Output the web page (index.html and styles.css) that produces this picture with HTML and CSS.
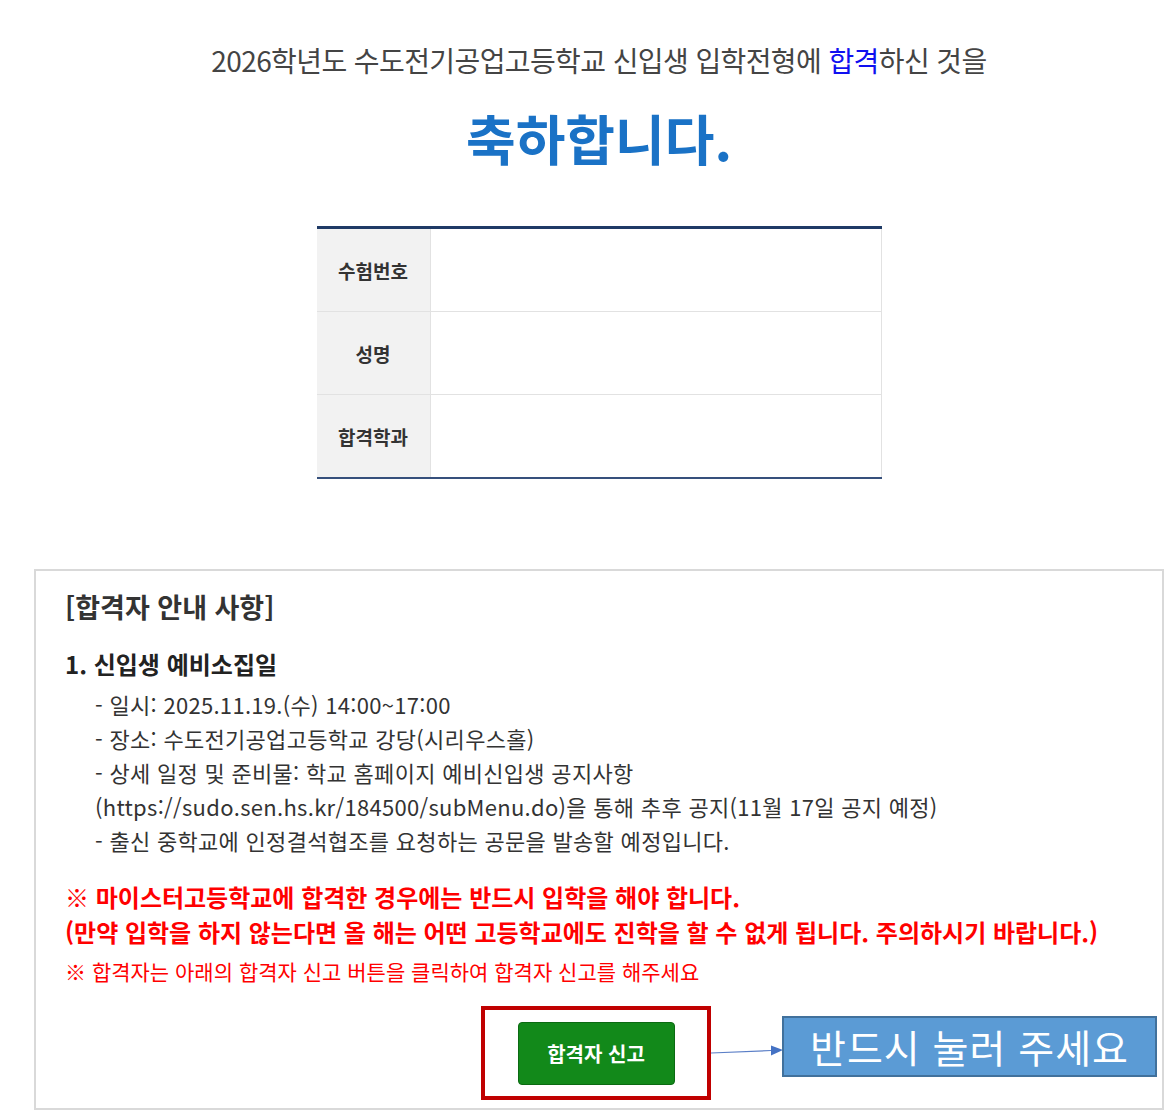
FILE: index.html
```html
<!DOCTYPE html>
<html lang="ko">
<head>
  <meta charset="UTF-8" />
  <meta name="viewport" content="width=device-width, initial-scale=1" />
  <title>합격자 조회 결과</title>
  <link rel="stylesheet" href="styles.css">
</head>
<body>
  <div class="page">
    <p class="lead">2026학년도 수도전기공업고등학교 신입생 입학전형에 <span class="hl">합격</span>하신 것을</p>
    <h1>축하합니다.</h1>

    <table class="result">
      <tr>
        <th>수험번호</th>
        <td></td>
      </tr>
      <tr>
        <th>성명</th>
        <td></td>
      </tr>
      <tr>
        <th>합격학과</th>
        <td></td>
      </tr>
    </table>

    <div class="notice">
      <h2>[합격자 안내 사항]</h2>
      <h3>1. 신입생 예비소집일</h3>
      <ul class="info">
        <li>- 일시: 2025.11.19.(수) 14:00~17:00</li>
        <li>- 장소: 수도전기공업고등학교 강당(시리우스홀)</li>
        <li>- 상세 일정 및 준비물: 학교 홈페이지 예비신입생 공지사항<br>(https://sudo.sen.hs.kr/184500/subMenu.do)을 통해 추후 공지(11월 17일 공지 예정)</li>
        <li>- 출신 중학교에 인정결석협조를 요청하는 공문을 발송할 예정입니다.</li>
      </ul>

      <p class="warn">※ 마이스터고등학교에 합격한 경우에는 반드시 입학을 해야 합니다.<br>(만약 입학을 하지 않는다면 올 해는 어떤 고등학교에도 진학을 할 수 없게 됩니다. 주의하시기 바랍니다.)</p>
      <p class="hint">※ 합격자는 아래의 합격자 신고 버튼을 클릭하여 합격자 신고를 해주세요</p>

      <div class="btn-row">
        <div class="mark">
          <button class="report">합격자 신고</button>
          <svg class="arrow" width="72" height="12" viewBox="0 0 72 12">
            <line x1="0" y1="8" x2="60" y2="5.5" stroke="#5b7fc7" stroke-width="1.2" />
            <polygon points="60,0.5 72,5 60,10.5" fill="#4472c4" />
          </svg>
          <div class="callout">반드시 눌러 주세요</div>
        </div>
      </div>
    </div>
  </div>
</body>
</html>
```

FILE: styles.css
```css
/* 기본 */
body {
  margin: 0;
  background: #fff;
  color: #333;
  font-family: "Noto Sans CJK KR", "Noto Sans", sans-serif;
}
.page {
  width: 1130px;
  margin-left: 34px;
  padding-top: 40px;
  padding-bottom: 6px;
}
.lead {
  margin: 0;
  text-align: center;
  font-size: 28px;
  line-height: 40px;
  color: #444;
  letter-spacing: -0.6px;
}
.lead .hl {
  color: #1010f0;
}
h1 {
  margin: 26px 0 0;
  text-align: center;
  font-size: 54px;
  line-height: 64px;
  font-weight: 700;
  color: #1a72c6;
}

/* 결과 표 */
.result {
  width: 565px;
  margin: 56px auto 0;
  border-collapse: collapse;
  border-top: 3px solid #1f3a66;
  border-bottom: 2px solid #36507c;
}
.result th {
  width: 113px;
  height: 82px;
  padding: 0;
  background: #f2f2f2;
  border-right: 1px solid #e2e2e2;
  border-bottom: 1px solid #e2e2e2;
  font-size: 19px;
  font-weight: 700;
  color: #333;
}
.result td {
  border-bottom: 1px solid #e2e2e2;
  border-right: 1px solid #e2e2e2;
}
.result tr:last-child th,
.result tr:last-child td {
  border-bottom: none;
}

/* 안내 박스 */
.notice {
  margin-top: 90px;
  border: 2px solid #d9d9d9;
  padding: 16px 29px 8px;
}
.notice h2 {
  margin: 0;
  font-size: 27px;
  line-height: 40px;
  font-weight: 600;
  color: #333;
}
.notice h3 {
  margin: 19px 0 0;
  font-size: 24px;
  line-height: 36px;
  font-weight: 700;
  color: #222;
}
.info {
  list-style: none;
  margin: 5px 0 0;
  padding: 0 0 0 30px;
  font-size: 22px;
  line-height: 34px;
  color: #333;
  letter-spacing: 0.3px;
}
.warn {
  margin: 22px 0 0;
  color: #f00;
  font-size: 24px;
  font-weight: 700;
  line-height: 35px;
}
.hint {
  margin: 6px 0 0;
  color: #f00;
  font-size: 21px;
  line-height: 32px;
}

/* 신고 버튼 */
.btn-row {
  display: flex;
  justify-content: center;
  margin-top: 19px;
}
.mark {
  position: relative;
  width: 222px;
  height: 86px;
  margin-right: 6px;
  border: 4px solid #c00000;
  display: flex;
  align-items: center;
  justify-content: center;
}
.report {
  width: 157px;
  height: 63px;
  background: #12891a;
  border: 1px solid #0b6a12;
  border-radius: 4px;
  color: #fff;
  font-family: inherit;
  font-size: 20px;
  font-weight: 700;
  cursor: pointer;
}
.arrow {
  position: absolute;
  left: 226px;
  top: 35px;
}
.callout {
  position: absolute;
  left: 297px;
  top: 6px;
  width: 371px;
  height: 57px;
  background: #5b9bd5;
  border: 2px solid #41719c;
  color: #fff;
  font-size: 39px;
  line-height: 56px;
  text-align: center;
  letter-spacing: 1px;
}
```
